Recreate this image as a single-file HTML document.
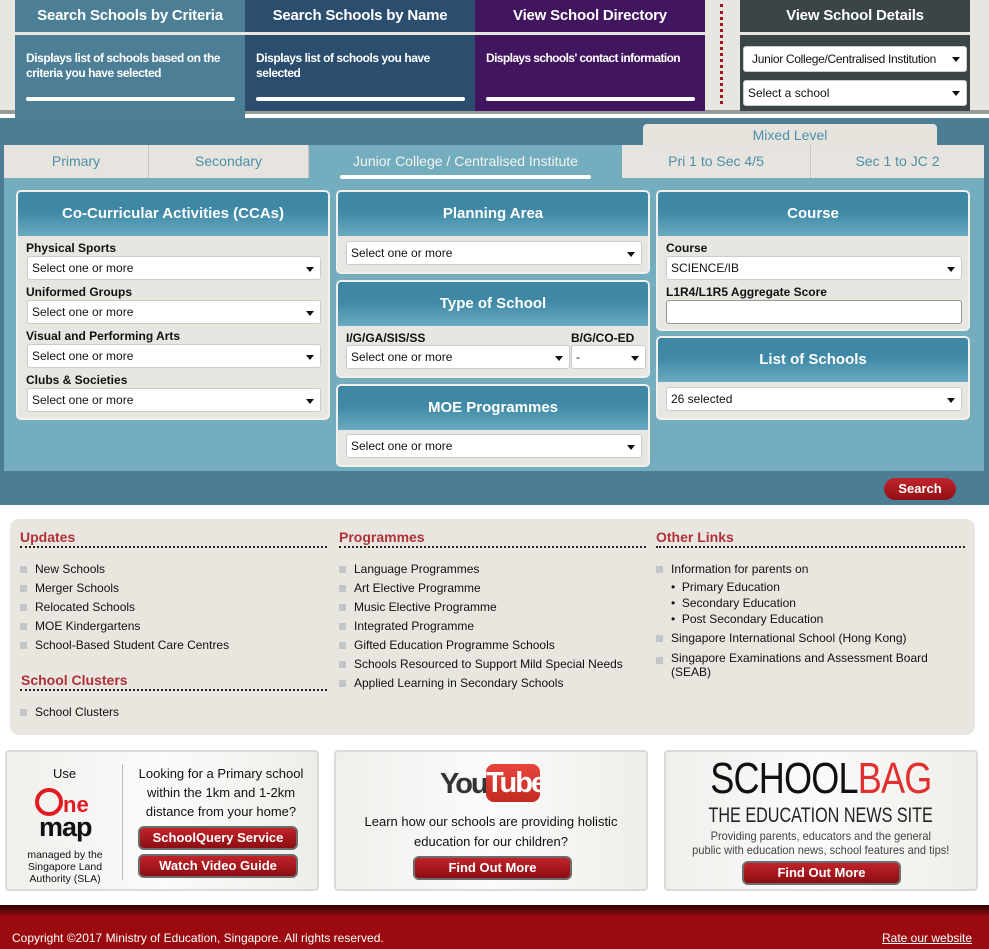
<!DOCTYPE html>
<html><head><meta charset="utf-8"><style>
*{box-sizing:border-box;margin:0;padding:0}
body{width:989px;height:949px;position:relative;overflow:hidden;background:#fff;font-family:"Liberation Sans",Arial,sans-serif;font-size:12px;color:#111}
.a{position:absolute}
.th{color:#fff;font-weight:bold;font-size:15px;text-align:center;line-height:32px;height:32px;letter-spacing:-0.2px}
.tb{color:#fff;font-weight:bold;font-size:12px;padding:16px 6px 0 11px;line-height:15px;letter-spacing:-0.45px}
.bar{position:absolute;left:11px;right:10px;bottom:10px;height:4px;background:#fff;border-radius:2px}
.tab{position:absolute;top:145px;height:33px;background:#e7e4df;color:#4a90a8;font-size:14px;text-align:center;line-height:32px;border-right:1px solid #c9c6c0}
.box{position:absolute;background:#e8e6e1;border:2px solid #f2f0ec;border-radius:5px;overflow:hidden}
.hd{height:44px;background:linear-gradient(#3d87a4 0%,#3f89a6 45%,#6aabc0 100%);color:#fff;font-weight:bold;font-size:15px;text-align:center;line-height:44px}
.lbl{position:absolute;font-weight:bold;font-size:12px;color:#111}
.sel{position:absolute;height:24px;background:#fff;border:1px solid #ccc;border-radius:3px;font-size:12px;line-height:22px;padding-left:4px;color:#111}
.sel:after{content:"";position:absolute;right:6px;top:10px;border-left:4px solid transparent;border-right:4px solid transparent;border-top:5px solid #111}
.h3{position:absolute;color:#b0313a;font-weight:bold;font-size:14px}
.dl{position:absolute;height:2px;border-top:2px dotted #222}
ul.l{position:absolute;list-style:none;font-size:12px;line-height:19px;color:#111}
ul.l li{padding-left:15px;position:relative}
ul.l li:before{content:"";position:absolute;left:0;top:6px;width:7px;height:7px;background:#c2c6c8}
.card{position:absolute;top:750px;height:141px;border:2px solid #dcdad5;border-radius:4px;background:linear-gradient(90deg,#f0efec,#fbfbfa 50%,#eeede9)}
.btn{position:absolute;background:linear-gradient(#c0242a,#8c0d12);color:#fff;font-weight:bold;font-size:13px;text-align:center;border-radius:6px;border:2px solid #6d6d6d;line-height:20px}
.sq{display:inline-block;transform-origin:center top;white-space:nowrap}
</style></head><body>
<div class="a" style="left:0;top:0;width:989px;height:111px;background:#e8e6e1"></div>
<div class="a" style="left:0;top:110px;width:989px;height:4px;background:#9a9a9a"></div>
<div class="a" style="left:0;top:114px;width:989px;height:4px;background:#fff"></div>

<div class="a" style="left:15px;top:0;width:230px;height:118px;">
 <div class="th" style="background:#4c7f96">Search Schools by Criteria</div>
 <div class="a" style="top:35px;left:0;width:230px;height:83px;background:#4c7f96"><div class="tb">Displays list of schools based on the criteria you have selected</div><div class="bar" style="bottom:17px"></div></div>
</div>
<div class="a" style="left:245px;top:0;width:230px;height:111px;">
 <div class="th" style="background:#2b4e6f">Search Schools by Name</div>
 <div class="a" style="top:35px;left:0;width:230px;height:76px;background:#2b4e6f"><div class="tb">Displays list of schools you have selected</div><div class="bar"></div></div>
</div>
<div class="a" style="left:475px;top:0;width:230px;height:111px;">
 <div class="th" style="background:#42155f">View School Directory</div>
 <div class="a" style="top:35px;left:0;width:230px;height:76px;background:#42155f"><div class="tb" style="white-space:nowrap;letter-spacing:-0.6px">Displays schools' contact information</div><div class="bar"></div></div>
</div>
<div class="a" style="left:720px;top:4px;width:0;height:100px;border-left:3px dotted #a0141a"></div>
<div class="a" style="left:740px;top:0;width:230px;height:111px;">
 <div class="th" style="background:#3b4447">View School Details</div>
 <div class="a" style="top:35px;left:0;width:230px;height:76px;background:#3b4447">
  <div class="sel" style="left:3px;top:11px;width:224px;height:26px;line-height:24px;padding-left:8px;padding-right:18px;overflow:hidden;white-space:nowrap;letter-spacing:-0.3px">Junior College/Centralised Institution</div>
  <div class="sel" style="left:3px;top:45px;width:224px;height:26px;line-height:24px">Select a school</div>
 </div>
</div>

<div class="a" style="left:0;top:118px;width:989px;height:387px;background:#4b7e94"></div>
<div class="a" style="left:643px;top:124px;width:294px;height:22px;background:#e6e3dd;border-radius:4px 4px 0 0;color:#4a90a8;font-size:14px;text-align:center;line-height:22px">Mixed Level</div>
<div class="a" style="left:4px;top:178px;width:980px;height:293px;background:#74adbd"></div>
<div class="tab" style="left:4px;width:145px">Primary</div>
<div class="tab" style="left:149px;width:160px;">Secondary</div>
<div class="tab" style="left:309px;width:313px;background:#74adbd;color:#f4f4f4;border:none">Junior College / Centralised Institute</div>
<div class="a" style="left:340px;top:175px;width:251px;height:4px;background:#fff;border-radius:2px"></div>
<div class="tab" style="left:622px;width:189px">Pri 1 to Sec 4/5</div>
<div class="tab" style="left:811px;width:173px;border:none">Sec 1 to JC 2</div>

<div class="box" style="left:16px;top:190px;width:314px;height:230px"><div class="hd">Co-Curricular Activities (CCAs)</div>
 <div class="lbl" style="left:8px;top:49px">Physical Sports</div><div class="sel" style="left:9px;top:64px;width:294px">Select one or more</div>
 <div class="lbl" style="left:8px;top:93px">Uniformed Groups</div><div class="sel" style="left:9px;top:108px;width:294px">Select one or more</div>
 <div class="lbl" style="left:8px;top:137px">Visual and Performing Arts</div><div class="sel" style="left:9px;top:152px;width:294px">Select one or more</div>
 <div class="lbl" style="left:8px;top:181px">Clubs &amp; Societies</div><div class="sel" style="left:9px;top:196px;width:294px">Select one or more</div>
</div>
<div class="box" style="left:336px;top:190px;width:314px;height:84px"><div class="hd">Planning Area</div>
 <div class="sel" style="left:8px;top:49px;width:296px">Select one or more</div></div>
<div class="box" style="left:336px;top:280px;width:314px;height:98px"><div class="hd">Type of School</div>
 <div class="lbl" style="left:8px;top:49px">I/G/GA/SIS/SS</div><div class="lbl" style="left:233px;top:49px">B/G/CO-ED</div>
 <div class="sel" style="left:8px;top:63px;width:224px">Select one or more</div>
 <div class="sel" style="left:233px;top:63px;width:75px">-</div></div>
<div class="box" style="left:336px;top:384px;width:314px;height:83px"><div class="hd">MOE Programmes</div>
 <div class="sel" style="left:8px;top:48px;width:296px">Select one or more</div></div>
<div class="box" style="left:656px;top:190px;width:314px;height:141px"><div class="hd">Course</div>
 <div class="lbl" style="left:8px;top:49px">Course</div><div class="sel" style="left:8px;top:64px;width:296px">SCIENCE/IB</div>
 <div class="lbl" style="left:8px;top:93px">L1R4/L1R5 Aggregate Score</div><div class="sel" style="left:8px;top:108px;width:296px;border-color:#999"></div></div>
<style>.box .sel:nth-last-child(1):empty:after{display:none}</style>
<div class="box" style="left:656px;top:336px;width:314px;height:84px"><div class="hd">List of Schools</div>
 <div class="sel" style="left:8px;top:49px;width:296px">26 selected</div></div>
<div class="a" style="left:884px;top:478px;width:72px;height:22px;background:linear-gradient(#c0262c,#930f14);border-radius:11px;color:#fff;font-weight:bold;font-size:13px;text-align:center;line-height:22px">Search</div>

<div class="a" style="left:10px;top:519px;width:965px;height:216px;background:#e9e6e0;border-radius:9px"></div>
<div class="h3" style="left:20px;top:529px">Updates</div><div class="dl" style="left:20px;top:546px;width:307px"></div>
<ul class="l" style="left:20px;top:560px"><li>New Schools</li><li>Merger Schools</li><li>Relocated Schools</li><li>MOE Kindergartens</li><li>School-Based Student Care Centres</li></ul>
<div class="h3" style="left:21px;top:672px">School Clusters</div><div class="dl" style="left:20px;top:689px;width:307px"></div>
<ul class="l" style="left:20px;top:703px"><li>School Clusters</li></ul>
<div class="h3" style="left:339px;top:529px">Programmes</div><div class="dl" style="left:339px;top:546px;width:307px"></div>
<ul class="l" style="left:339px;top:560px"><li>Language Programmes</li><li>Art Elective Programme</li><li>Music Elective Programme</li><li>Integrated Programme</li><li>Gifted Education Programme Schools</li><li>Schools Resourced to Support Mild Special Needs</li><li>Applied Learning in Secondary Schools</li></ul>
<div class="h3" style="left:656px;top:529px">Other Links</div><div class="dl" style="left:656px;top:546px;width:309px"></div>
<ul class="l" style="left:656px;top:560px;line-height:16px;width:290px"><li style="line-height:19px">Information for parents on</li>
<li class="nb">• &nbsp;Primary Education</li><li class="nb">• &nbsp;Secondary Education</li><li class="nb">• &nbsp;Post Secondary Education</li>
<li style="line-height:19px;margin-top:2px">Singapore International School (Hong Kong)</li><li style="line-height:14px;margin-top:3px">Singapore Examinations and Assessment Board (SEAB)</li></ul>
<style>ul.l li.nb:before{display:none}ul.l li.nb{padding-left:15px!important}</style>

<div class="card" style="left:5px;width:314px">
 <div class="a" style="left:46px;top:14px;font-size:13px">Use</div>
 <div class="a" style="left:24px;top:34px;width:70px;height:60px">
  <div class="a" style="left:4px;top:2px;width:28px;height:28px;border:4px solid #e21b23;border-radius:50%"></div>
  <div class="a" style="left:32px;top:6px;color:#e21b23;font-weight:bold;font-size:22px">ne</div>
  <div class="a" style="left:8px;top:26px;color:#111;font-weight:bold;font-size:27px;letter-spacing:-1px">map</div>
 </div>
 <div class="a" style="left:12px;top:97px;width:92px;text-align:center;font-size:10.5px;line-height:12px">managed by the Singapore Land Authority (SLA)</div>
 <div class="a" style="left:115px;top:12px;width:1px;height:116px;background:#bbb"></div>
 <div class="a" style="left:124px;top:12px;width:180px;text-align:center;font-size:13px;line-height:19px">Looking for a Primary school within the 1km and 1-2km distance from your home?</div>
 <div class="btn" style="left:131px;top:74px;width:160px">SchoolQuery Service</div>
 <div class="btn" style="left:131px;top:102px;width:160px">Watch Video Guide</div>
</div>
<div class="card" style="left:334px;width:314px">
 <div class="a" style="left:104px;top:16px;font-size:29px;font-weight:bold;color:#333;letter-spacing:-2px">You</div>
 <div class="a" style="left:150px;top:12px;width:54px;height:38px;background:linear-gradient(#e8453c,#c22a22);border-radius:8px;color:#fff;font-size:29px;font-weight:bold;text-align:center;line-height:38px;letter-spacing:-2px;overflow:hidden">Tube</div>
 <div class="a" style="left:0;top:60px;width:310px;text-align:center;font-size:13px;line-height:20px">Learn how our schools are providing holistic education for our children?</div>
 <div class="btn" style="left:77px;top:104px;width:159px;height:24px">Find Out More</div>
</div>
<div class="card" style="left:664px;width:314px">
 <div class="a" style="left:0;top:4px;width:310px;text-align:center;font-size:44px;line-height:46px;letter-spacing:-1px"><span class="sq" style="transform:scaleX(0.82)"><span style="color:#111">SCHOOL</span><span style="color:#e03030">BAG</span></span></div>
 <div class="a" style="left:0;top:52px;width:310px;text-align:center;font-size:21px;color:#222"><span class="sq" style="transform:scaleX(0.77)">THE EDUCATION NEWS SITE</span></div>
 <div class="a" style="left:0;top:77px;width:310px;text-align:center;font-size:12px;line-height:14px;color:#444"><span class="sq" style="transform:scaleX(0.92)">Providing parents, educators and the general<br>public with education news, school features and tips!</span></div>
 <div class="btn" style="left:76px;top:109px;width:159px;height:24px">Find Out More</div>
</div>

<div class="a" style="left:0;top:905px;width:989px;height:44px;background:linear-gradient(#2a0405 0px,#9b0a0e 12px,#9b0a0e 100%)"></div>
<div class="a" style="left:12px;top:931px;color:#fff;font-size:12px">Copyright ©2017 Ministry of Education, Singapore. All rights reserved.</div>
<div class="a" style="left:882px;top:931px;color:#fff;font-size:12px;text-decoration:underline">Rate our website</div>
</body></html>
